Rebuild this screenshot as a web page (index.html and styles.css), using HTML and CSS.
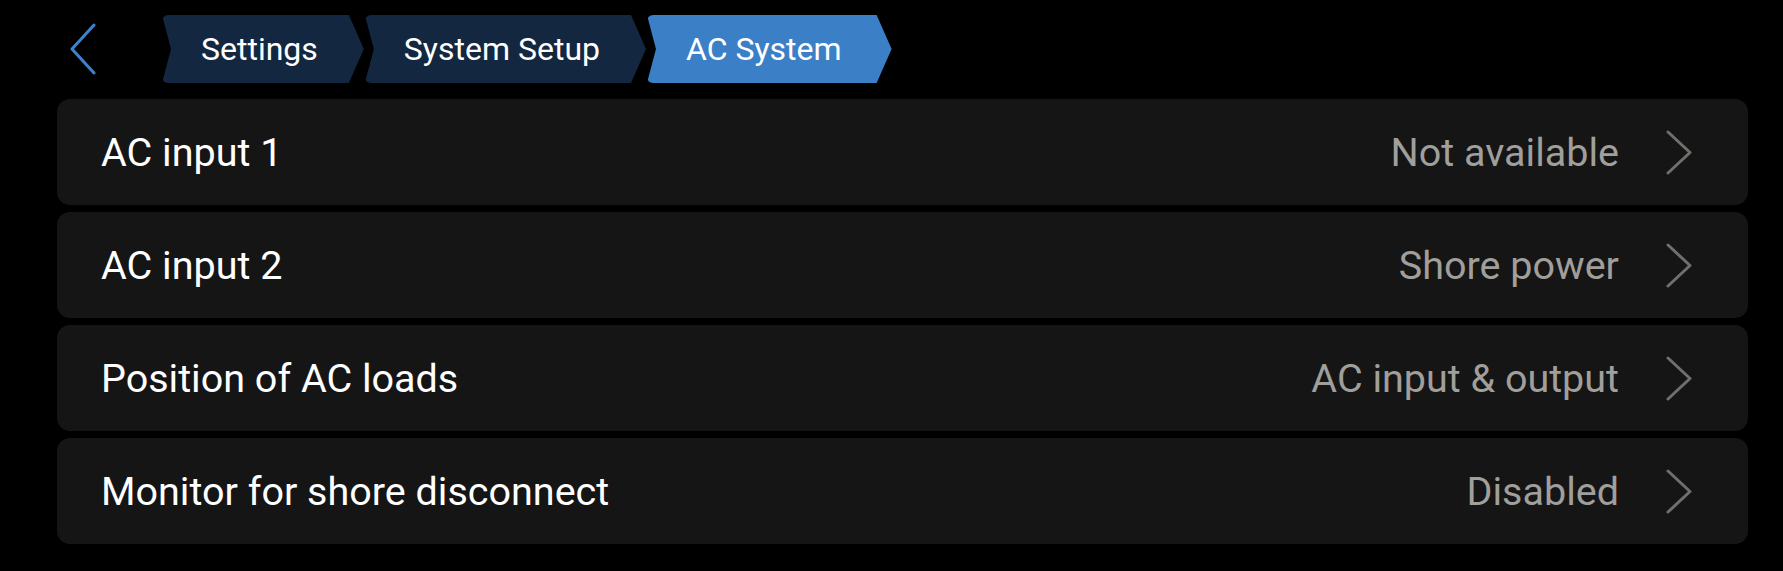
FILE: index.html
```html
<!DOCTYPE html>
<html lang="en">
<head>
<meta charset="utf-8">
<title>AC System</title>
<link rel="stylesheet" href="styles.css">
</head>
<body>
<div class="page">
  <header class="topbar">
    <button class="back" aria-label="Back">
      <svg width="28" height="52" viewBox="0 0 28 52"><path d="M25 2 L3 26 L25 50" fill="none" stroke="#3d82cc" stroke-width="3" stroke-linecap="round" stroke-linejoin="round"/></svg>
    </button>
    <nav class="crumbs">
      <span class="crumb">Settings</span>
      <span class="crumb">System Setup</span>
      <span class="crumb active">AC System</span>
    </nav>
  </header>
  <main class="list">
    <div class="row"><span class="label">AC input 1</span><span class="value">Not available</span><svg class="chev" width="28" height="45" viewBox="0 0 28 45"><path d="M3 2 L25 22.5 L3 43" fill="none" stroke="#6f6f6c" stroke-width="3" stroke-linecap="round" stroke-linejoin="round"/></svg></div>
    <div class="row"><span class="label">AC input 2</span><span class="value">Shore power</span><svg class="chev" width="28" height="45" viewBox="0 0 28 45"><path d="M3 2 L25 22.5 L3 43" fill="none" stroke="#6f6f6c" stroke-width="3" stroke-linecap="round" stroke-linejoin="round"/></svg></div>
    <div class="row"><span class="label">Position of AC loads</span><span class="value">AC input &amp; output</span><svg class="chev" width="28" height="45" viewBox="0 0 28 45"><path d="M3 2 L25 22.5 L3 43" fill="none" stroke="#6f6f6c" stroke-width="3" stroke-linecap="round" stroke-linejoin="round"/></svg></div>
    <div class="row"><span class="label">Monitor for shore disconnect</span><span class="value">Disabled</span><svg class="chev" width="28" height="45" viewBox="0 0 28 45"><path d="M3 2 L25 22.5 L3 43" fill="none" stroke="#6f6f6c" stroke-width="3" stroke-linecap="round" stroke-linejoin="round"/></svg></div>
  </main>
</div>
</body>
</html>
```
FILE: styles.css
```css
html, body {
  margin: 0;
  padding: 0;
  background: #000;
}
body {
  font-family: Roboto, "Liberation Sans", sans-serif;
  color: #fff;
  width: 1783px;
  height: 571px;
  overflow: hidden;
}
.page {
  display: flex;
  flex-direction: column;
}
.topbar {
  display: flex;
  align-items: center;
  height: 68px;
  margin-top: 15px;
}
.back {
  background: none;
  border: 0;
  padding: 0;
  margin: 0 65px 0 69px;
  width: 28px;
  height: 52px;
  display: flex;
}
.crumbs {
  display: flex;
  height: 68px;
  gap: 1px;
}
.crumb {
  display: flex;
  align-items: center;
  height: 68px;
  padding: 0 46px 0 39px;
  font-size: 32px;
  color: #fff;
  background: #132740;
  border-radius: 6px;
  clip-path: polygon(0 0, calc(100% - 15px) 0, 100% 50%, calc(100% - 15px) 100%, 0 100%, 9px 50%);
}
.crumb.active {
  background: #3b7fc7;
  padding-right: 50px;
}
.list {
  display: flex;
  flex-direction: column;
  gap: 7px;
  margin-top: 16px;
  padding: 0 35px 0 57px;
}
.row {
  display: flex;
  align-items: center;
  height: 106px;
  background: #151515;
  border-radius: 13px;
  padding: 0 55px 0 44px;
}
.label {
  font-size: 39.5px;
  color: #fff;
  flex: 1;
}
.value {
  font-size: 39.5px;
  color: #a09f9b;
  margin-right: 46px;
}
.chev {
  display: block;
}
```
